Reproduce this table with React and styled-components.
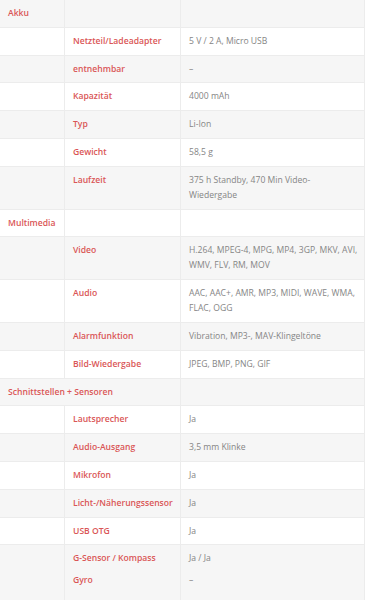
import React from 'react'
import styled, { createGlobalStyle } from 'styled-components'

const GlobalStyle = createGlobalStyle`
  html, body {
    margin: 0;
    padding: 0;
    background: #fff;
  }
  body {
    font-family: "Open Sans", "Liberation Sans", sans-serif;
    font-size: 8.6px;
    line-height: 15px;
  }
`

const specs = [
  {
    section: 'Akku',
    rows: [
      ['Netzteil/Ladeadapter', '5 V / 2 A, Micro USB'],
      ['entnehmbar', '–'],
      ['Kapazität', '4000 mAh'],
      ['Typ', 'Li-Ion'],
      ['Gewicht', '58,5 g'],
      ['Laufzeit', '375 h Standby, 470 Min Video-Wiedergabe'],
    ],
  },
  {
    section: 'Multimedia',
    rows: [
      ['Video', 'H.264, MPEG-4, MPG, MP4, 3GP, MKV, AVI, WMV, FLV, RM, MOV'],
      ['Audio', 'AAC, AAC+, AMR, MP3, MIDI, WAVE, WMA, FLAC, OGG'],
      ['Alarmfunktion', 'Vibration, MP3-, MAV-Klingeltöne'],
      ['Bild-Wiedergabe', 'JPEG, BMP, PNG, GIF'],
    ],
  },
  {
    section: 'Schnittstellen + Sensoren',
    wide: true,
    rows: [
      ['Lautsprecher', 'Ja'],
      ['Audio-Ausgang', '3,5 mm Klinke'],
      ['Mikrofon', 'Ja'],
      ['Licht-/Näherungssensor', 'Ja'],
      ['USB OTG', 'Ja'],
      [['G-Sensor / Kompass', 'Gyro'], ['Ja / Ja', '–']],
    ],
  },
]

const Table = styled.div`
  width: 365px;
  border-right: 1px solid #ececec;
  box-sizing: border-box;
`

const Row = styled.div`
  display: grid;
  grid-template-columns: 64px 116px 1fr;
  background: ${p => (p.$striped ? '#f6f6f6' : '#fff')};
  border-bottom: 1px solid #ececec;
`

const Cell = styled.div`
  padding: 6px ${p => (p.$tight ? '6.5px' : '8px')} 5.8px 8px;
  min-width: 0;
  grid-column: ${p => (p.$span ? `span ${p.$span}` : 'auto')};
  & + & {
    border-left: 1px solid #ececec;
  }
`

const Label = styled.span`
  color: #da5656;
  font-weight: 600;
  white-space: nowrap;
`

const Value = styled.span`
  color: #858585;
`

const Stack = styled.div`
  display: flex;
  flex-direction: column;
  gap: 7px;
  padding-bottom: 7px;
`

const renderLines = (content, Comp) =>
  Array.isArray(content) ? (
    <Stack>
      {content.map(line => (
        <Comp key={line}>{line}</Comp>
      ))}
    </Stack>
  ) : (
    <Comp>{content}</Comp>
  )

export default function App() {
  let index = 0
  return (
    <>
      <GlobalStyle />
      <Table>
        {specs.map(group => {
          const header = (
            <Row key={group.section} $striped={index++ % 2 === 0}>
              <Cell $span={group.wide ? 2 : 0}>
                <Label>{group.section}</Label>
              </Cell>
              {!group.wide && <Cell />}
              <Cell />
            </Row>
          )
          const rows = group.rows.map(([label, value]) => (
            <Row key={String(label)} $striped={index++ % 2 === 0}>
              <Cell />
              <Cell>{renderLines(label, Label)}</Cell>
              <Cell $tight>{renderLines(value, Value)}</Cell>
            </Row>
          ))
          return [header, ...rows]
        })}
      </Table>
    </>
  )
}
